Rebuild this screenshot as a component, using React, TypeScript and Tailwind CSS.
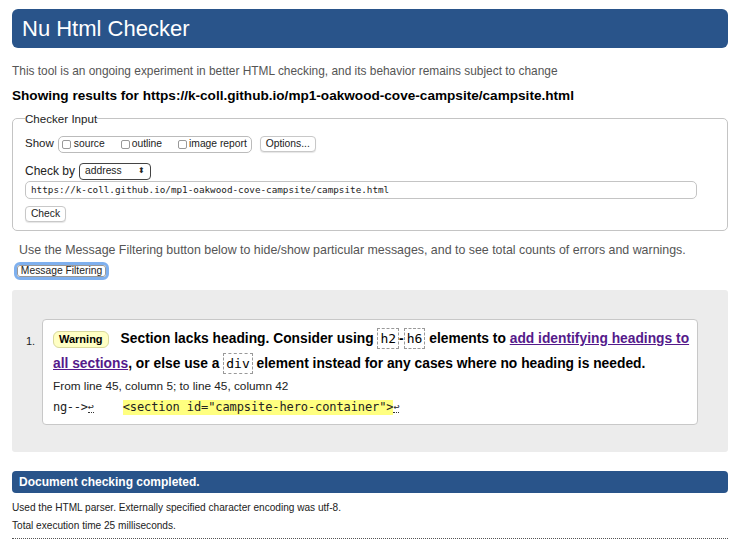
export default function App() {
  const sans = { fontFamily: '"Liberation Sans", Arial, sans-serif' }
  const mono = { fontFamily: '"DejaVu Sans Mono", "Liberation Mono", monospace' }
  return (
    <div className="w-[735px] h-[545px] overflow-hidden bg-white pl-[12px] pr-[7px] pt-[9px] text-[#222]" style={sans}>
      {/* header */}
      <div className="h-[39px] rounded-[6px] bg-[#29548a] flex items-center pl-[10px]">
        <h1 className="text-[22px] text-white leading-none">Nu Html Checker</h1>
      </div>

      <p className="mt-[16px] text-[11.9px] leading-[14px] text-[#555]">
        This tool is an ongoing experiment in better HTML checking, and its behavior remains subject to change
      </p>
      <h2 className="mt-[9px] text-[13.6px] leading-[18px] font-bold text-black">
        Showing results for https://k-coll.github.io/mp1-oakwood-cove-campsite/campsite.html
      </h2>

      {/* checker input */}
      <fieldset className="mt-[7px] border border-[#c4c4c4] rounded-[5px] px-[12px] pb-[6px] pt-[9px]">
        <legend className="text-[11.6px] leading-[13px] px-0 text-[#222]">Checker Input</legend>
        <div className="flex items-center h-[18px] mt-[1px] text-[11.5px]">
          <span>Show</span>
          <div className="ml-[4px] flex items-center h-[17px] w-[194px] border border-[#bbb] rounded-[5px] pl-[3px] text-[10.3px]">
            <span className="inline-block w-[9px] h-[9px] border border-[#999] rounded-[2px] bg-white mr-[3px]" />
            <span>source</span>
            <span className="inline-block w-[9px] h-[9px] border border-[#999] rounded-[2px] bg-white mr-[2px] ml-[16px]" />
            <span>outline</span>
            <span className="inline-block w-[9px] h-[9px] border border-[#999] rounded-[2px] bg-white mr-[2px] ml-[16px]" />
            <span>image report</span>
          </div>
          <button className="ml-[8px] h-[16px] w-[56px] border border-[#c8c8c8] rounded-[4px] bg-white text-[10.3px] leading-none shadow-[0_1px_1px_rgba(0,0,0,0.1)]">
            Options...
          </button>
        </div>
        <div className="flex items-center h-[18px] mt-[9px] text-[12px]">
          <span>Check by</span>
          <div className="ml-[4px] flex items-center justify-between h-[17px] w-[72px] border border-[#444] rounded-[4px] px-[5px] text-[10.3px]">
            <span>address</span>
            <span className="text-[8px] leading-none">⬍</span>
          </div>
        </div>
        <div className="mt-[1px] h-[18px] w-[672px] border border-[#c4c4c4] rounded-[5px] flex items-center pl-[5px] text-[9.3px]" style={mono}>
          https://k-coll.github.io/mp1-oakwood-cove-campsite/campsite.html
        </div>
        <button className="mt-[7px] h-[16px] w-[41px] border border-[#c8c8c8] rounded-[4px] bg-white text-[10.3px] leading-none shadow-[0_1px_1px_rgba(0,0,0,0.1)]">
          Check
        </button>
      </fieldset>

      <p className="mt-[12px] ml-[7px] text-[12.4px] leading-[14px] text-[#555] whitespace-nowrap">
        Use the Message Filtering button below to hide/show particular messages, and to see total counts of errors and warnings.
      </p>
      <div className="mt-[5px] ml-[2px] w-[95px] h-[18px] rounded-[6px] border-[3px] border-[#7fb0ee] flex">
        <button className="flex-1 bg-white rounded-[3px] border border-[#999] text-[10.3px] leading-none">Message Filtering</button>
      </div>

      {/* results */}
      <div className="mt-[10px] h-[162px] bg-[#ececec] rounded-[3px] pt-[29px] pl-[14px] flex items-start">
        <span className="text-[11px] mt-[14px] w-[16px]">1.</span>
        <div className="w-[656px] h-[106px] bg-white border border-[#c8c8c8] rounded-[4px] pl-[10px] pt-[6px]">
          <div className="text-[13.8px] font-bold leading-[25px] text-black pr-[2px]">
            <span className="inline-block align-middle mr-[12px] h-[17px] leading-[15px] px-[5px] bg-[#ffffc4] border border-[#d9d99c] rounded-[6px] text-[11px]">Warning</span>
            Section lacks heading. Consider using{' '}
            <code className="font-normal border border-dashed border-[#999] px-[2px] py-[2px] text-[13px]" style={mono}>h2</code>-<code className="font-normal border border-dashed border-[#999] px-[2px] py-[2px] text-[13px]" style={mono}>h6</code>{' '}
            elements to <a className="text-[#551a8b] underline">add identifying headings to all sections</a>, or else use a{' '}
            <code className="font-normal border border-dashed border-[#999] px-[2px] py-[2px] text-[13px]" style={mono}>div</code>{' '}
            element instead for any cases where no heading is needed.
          </div>
          <p className="text-[11.8px] leading-[14px] mt-[3px]">From line 45, column 5; to line 45, column 42</p>
          <div className="mt-[7px] flex items-center text-[12px] leading-[15px]" style={mono}>
            <span className="tracking-[-0.3px]">ng--&gt;</span>
            <span className="text-[10px] border-b border-dotted border-[#333] leading-[10px]">↩</span>
            <span className="ml-[29px] bg-[#ffff80] tracking-[-0.1px]">&lt;section id="campsite-hero-container"&gt;</span>
            <span className="text-[10px] border-b border-dotted border-[#333] leading-[10px]">↩</span>
          </div>
        </div>
      </div>

      {/* footer */}
      <div className="mt-[19px] h-[22px] rounded-[4px] bg-[#29548a] flex items-center pl-[7px]">
        <span className="text-white text-[12px] font-bold">Document checking completed.</span>
      </div>
      <p className="mt-[8px] text-[10.1px] leading-[14px] text-[#222]">Used the HTML parser. Externally specified character encoding was utf-8.</p>
      <p className="mt-[4px] text-[10.1px] leading-[14px] text-[#222]">Total execution time 25 milliseconds.</p>
      <div className="mt-[5px] border-b border-dotted border-[#555]" />
    </div>
  )
}
